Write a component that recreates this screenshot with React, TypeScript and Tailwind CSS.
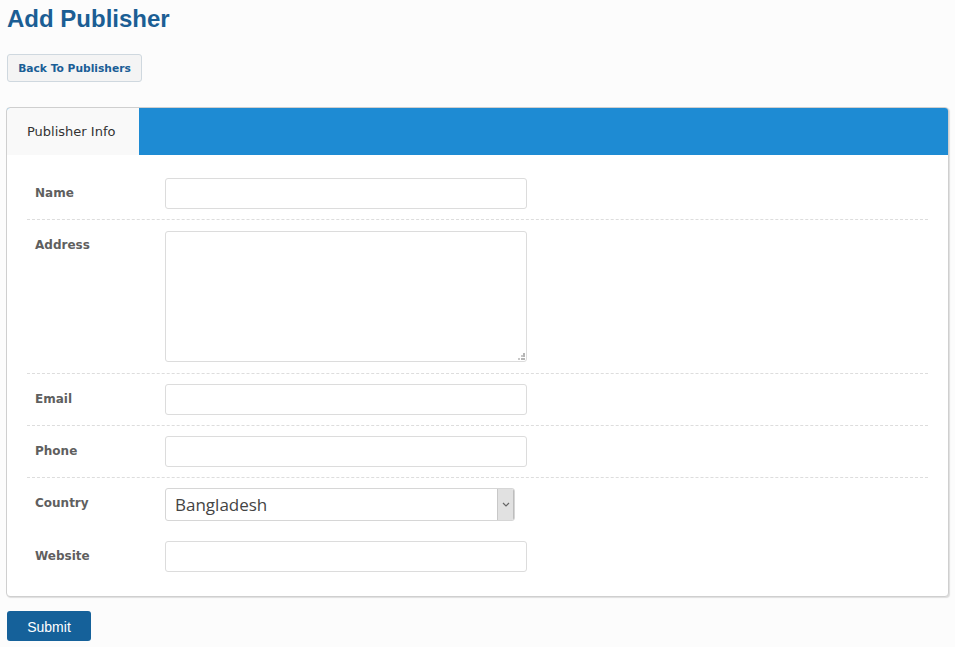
import React from "react";

const labelBase =
  "w-[138px] shrink-0 pl-[8px] text-[12px] leading-[16px] font-bold text-[#5f5f5f]";
const inputCls =
  "block w-[362px] h-[31px] rounded-[3px] border border-[#dcdcdc] bg-white px-2 outline-none";

function Row({
  label,
  children,
  divider = true,
  pad = "py-[10px]",
  labelPad = "pt-[7px]",
}: {
  label: string;
  children: React.ReactNode;
  divider?: boolean;
  pad?: string;
  labelPad?: string;
}) {
  return (
    <div
      className={`flex ${pad} ${divider ? "border-b border-dashed border-[#dddddd]" : ""}`}
    >
      <div className={`${labelBase} ${labelPad}`}>{label}</div>
      <div>{children}</div>
    </div>
  );
}

export default function App() {
  return (
    <div
      className="min-h-[647px] bg-[#fcfcfc] px-[6px]"
      style={{ fontFamily: '"DejaVu Sans", Verdana, sans-serif' }}
    >
      <h1
        className="pl-[1px] pt-[5px] text-[24px] leading-[28px] font-bold text-[#1b5e94]"
        style={{ fontFamily: '"Liberation Sans", Arial, sans-serif' }}
      >
        Add Publisher
      </h1>
      <div className="mt-[21px] pl-[1px]">
        <button className="h-[28px] w-[135px] rounded-[3px] border border-[#cfd8df] bg-[#f4f4f4] pt-[2px] text-[10.7px] font-bold text-[#1a5e96]">
          Back To Publishers
        </button>
      </div>
      <div className="mt-[25px] rounded-[4px] border border-[#cfcfcf] bg-white shadow-[1px_1px_1px_rgba(0,0,0,0.12)]">
        <div className="flex h-[47px] rounded-t-[3px] bg-[#1e8bd3]">
          <div className="flex w-[132px] items-center rounded-tl-[3px] bg-[#f9f9f9] pl-[20px] pt-[1px] text-[13px] text-[#333]">
            Publisher Info
          </div>
        </div>
        <div className="px-[20px] pt-[13px] pb-[14px]">
          <Row label="Name">
            <input className={inputCls} />
          </Row>
          <Row label="Address" pad="pt-[11px] pb-[11px]" labelPad="pt-[6px]">
            <div className="relative">
              <textarea className="block h-[131px] w-[362px] resize-none rounded-[3px] border border-[#dcdcdc] bg-white p-2 outline-none" />
              <svg
                className="absolute bottom-[2px] right-[2px]"
                width="7"
                height="7"
                viewBox="0 0 7 7"
              >
                <rect x="5" y="0" width="2" height="2" fill="#b5b5b5" />
                <rect x="3" y="2" width="2" height="2" fill="#c8c8c8" />
                <rect x="5" y="2" width="2" height="2" fill="#b5b5b5" />
                <rect x="0" y="5" width="2" height="2" fill="#c8c8c8" />
                <rect x="3" y="5" width="2" height="2" fill="#b5b5b5" />
                <rect x="5" y="5" width="2" height="2" fill="#b5b5b5" />
              </svg>
            </div>
          </Row>
          <Row label="Email">
            <input className={inputCls} />
          </Row>
          <Row label="Phone">
            <input className={inputCls} />
          </Row>
          <Row label="Country" divider={false}>
            <div className="flex h-[33px] w-[350px] overflow-hidden rounded-[3px] border border-[#d6d6d6] bg-white">
              <div
                className="flex flex-1 items-center pl-[9px] text-[17px] text-[#444]"
                style={{ fontFamily: '"Open Sans", sans-serif' }}
              >
                Bangladesh
              </div>
              <div className="flex w-[17px] items-center justify-center border-l border-[#c8c8c8] bg-[#e1e1e1] shadow-[inset_-1px_0_0_#bdbdbd]">
                <svg width="8" height="5" viewBox="0 0 8 5">
                  <path d="M1 1 L4 4 L7 1" fill="none" stroke="#666" strokeWidth="1.2" />
                </svg>
              </div>
            </div>
          </Row>
          <Row label="Website" divider={false}>
            <input className={inputCls} />
          </Row>
        </div>
      </div>
      <div className="mt-[14px] pl-[1px] pb-[6px]">
        <button
          className="h-[30px] w-[84px] rounded-[3px] bg-[#15619a] pt-[2px] text-[14px] text-white"
          style={{ fontFamily: '"Liberation Sans", Arial, sans-serif' }}
        >
          Submit
        </button>
      </div>
    </div>
  );
}
